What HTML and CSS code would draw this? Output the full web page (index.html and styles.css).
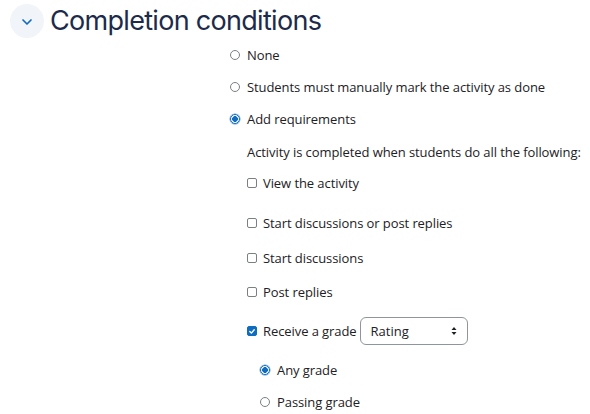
FILE: index.html
```html
<!DOCTYPE html>
<html lang="en">
<head>
<meta charset="utf-8">
<title>Completion conditions</title>
<link rel="stylesheet" href="styles.css">
</head>
<body>
<div class="page">
  <div class="header">
    <span class="toggle">
      <svg width="12" height="8" viewBox="0 0 12 8"><path d="M2 2 L6 6 L10 2" fill="none" stroke="#0f6cbf" stroke-width="1.7" stroke-linecap="round" stroke-linejoin="round"/></svg>
    </span>
    <h3 class="title">Completion conditions</h3>
  </div>
  <div class="form">
    <div class="row r-none"><span class="radio"></span><span>None</span></div>
    <div class="row r-manual"><span class="radio"></span><span>Students must manually mark the activity as done</span></div>
    <div class="row r-add"><span class="radio checked"></span><span>Add requirements</span></div>
    <div class="sub">
      <div class="row r-intro"><span>Activity is completed when students do all the following:</span></div>
      <div class="row r-view"><span class="check"></span><span>View the activity</span></div>
      <div class="row r-either"><span class="check"></span><span>Start discussions or post replies</span></div>
      <div class="row r-start"><span class="check"></span><span>Start discussions</span></div>
      <div class="row r-post"><span class="check"></span><span>Post replies</span></div>
      <div class="row r-grade"><span class="check checked"><svg width="9" height="9" viewBox="0 0 9 9"><path d="M2 4.6 L3.8 6.3 L7 2.6" fill="none" stroke="#fff" stroke-width="1.6" stroke-linecap="round" stroke-linejoin="round"/></svg></span><span>Receive a grade</span>
        <span class="select"><span>Rating</span><svg width="6" height="10" viewBox="0 0 6 10"><path d="M0.5 4 L3 1 L5.5 4 Z M0.5 6 L3 9 L5.5 6 Z" fill="#1d2125"/></svg></span>
      </div>
      <div class="gradeopts">
        <div class="row r-any"><span class="radio checked"></span><span>Any grade</span></div>
        <div class="row r-pass"><span class="radio"></span><span>Passing grade</span></div>
      </div>
    </div>
  </div>
</div>
</body>
</html>
```
FILE: styles.css
```css
html, body {
  margin: 0;
  padding: 0;
  background: #ffffff;
}
body {
  font-family: "Open Sans", "Noto Sans", sans-serif;
  font-size: 13px;
  letter-spacing: -0.08px;
  color: #1d2125;
}
.page {
  width: 590px;
  height: 414px;
  overflow: hidden;
}
.header {
  display: flex;
  align-items: center;
  padding: 4px 0 0 10px;
  height: 34px;
}
.toggle {
  width: 34px;
  height: 34px;
  border-radius: 50%;
  background: #f1f5fa;
  display: flex;
  align-items: center;
  justify-content: center;
  margin-right: 6px;
}
.toggle svg { display: block; margin-top: 1px; }
.title {
  margin: 0;
  font-family: Inter, "Noto Sans", sans-serif;
  font-weight: 400;
  font-size: 27px;
  line-height: 34px;
  color: #1d2b4b;
  letter-spacing: -0.7px;
}
.form {
  padding-left: 230px;
  padding-top: 7px;
  display: flex;
  flex-direction: column;
}
.row {
  display: flex;
  align-items: center;
  height: 20px;
  line-height: 20px;
  white-space: nowrap;
}
.r-none { margin-bottom: 12px; }
.r-manual { margin-bottom: 12px; }
.r-add { margin-bottom: 13px; }
.sub {
  padding-left: 17px;
  display: flex;
  flex-direction: column;
}
.r-intro { margin-bottom: 11px; }
.r-view { margin-bottom: 20px; }
.r-either { margin-bottom: 15px; }
.r-start { margin-bottom: 14px; }
.r-post { margin-bottom: 15px; }
.r-grade { height: 28px; margin-bottom: 15px; }
.gradeopts {
  padding-left: 13px;
  display: flex;
  flex-direction: column;
}
.r-any { margin-bottom: 12px; }
.radio {
  box-sizing: border-box;
  width: 10px;
  height: 10px;
  border-radius: 50%;
  border: 1px solid #7a7f86;
  margin-right: 7px;
  flex: none;
  background: #fff;
}
.radio.checked {
  border: 1px solid #0f6cbf;
  background: radial-gradient(circle, #0f6cbf 0 2.6px, #fff 3.1px);
  box-shadow: 0 0 0 0.5px #5b9ad6;
}
.check {
  box-sizing: border-box;
  width: 10px;
  height: 10px;
  border-radius: 2px;
  border: 1px solid #7a7f86;
  margin-right: 6px;
  flex: none;
  background: #fff;
  display: flex;
  align-items: center;
  justify-content: center;
}
.check.checked {
  background: #0f6cbf;
  border-color: #0f6cbf;
}
.check svg { display: block; }
.select {
  box-sizing: border-box;
  margin-left: 3px;
  width: 108px;
  height: 28px;
  border: 1px solid #8f959e;
  border-radius: 6px;
  display: flex;
  align-items: center;
  justify-content: space-between;
  padding: 0 10px 0 10px;
  letter-spacing: 0;
}
.select svg { display: block; }
```
